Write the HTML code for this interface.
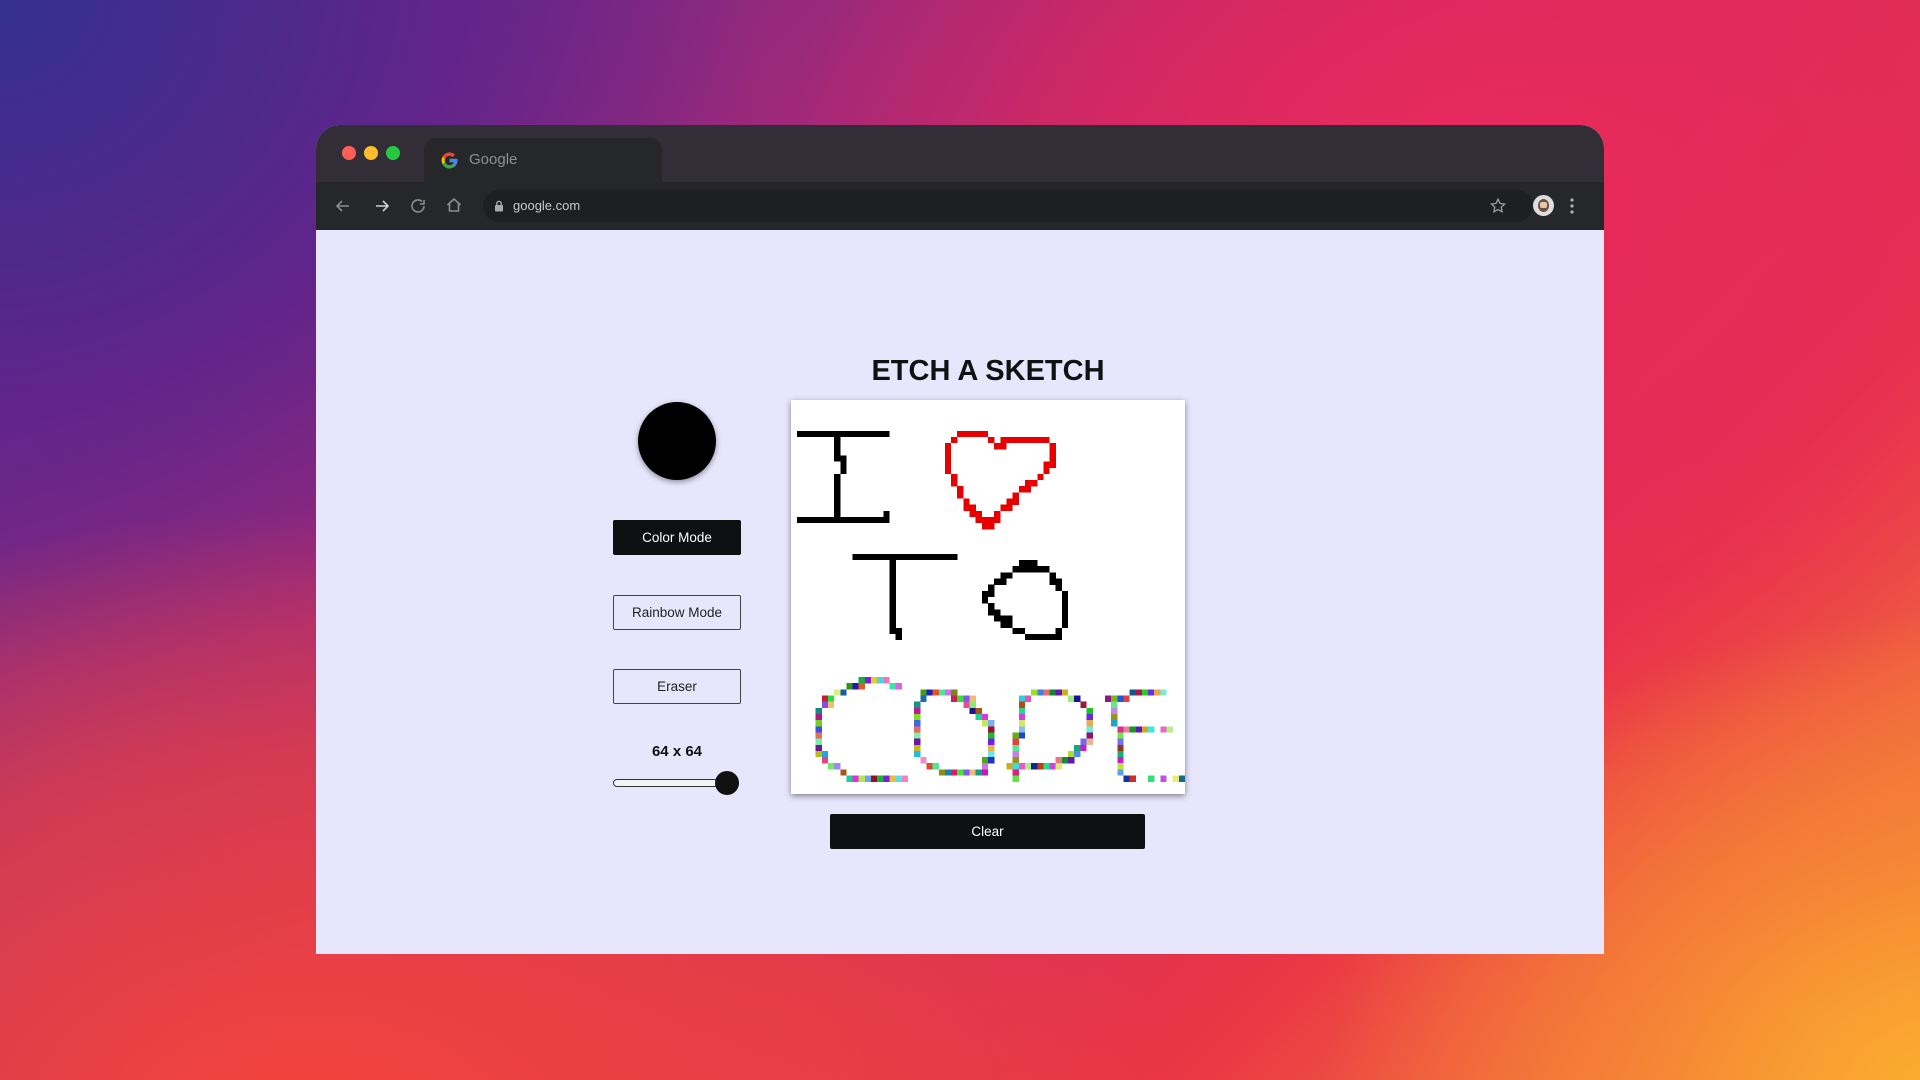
<!DOCTYPE html>
<html><head><meta charset="utf-8"><style>
*{margin:0;padding:0;box-sizing:border-box}
body{width:1920px;height:1080px;overflow:hidden;position:relative;font-family:"Liberation Sans",sans-serif;
background:
radial-gradient(ellipse 900px 700px at 1950px 1100px,#fbb02f 0%,rgba(247,140,50,.7) 35%,rgba(240,80,60,0) 70%),
radial-gradient(ellipse 1100px 800px at 300px 1150px,#f4453a 0%,rgba(240,70,60,.6) 50%,rgba(240,70,60,0) 80%),
radial-gradient(ellipse 900px 700px at 1500px 200px,#ea2a5a 0%,rgba(230,40,90,.6) 45%,rgba(230,40,90,0) 80%),
radial-gradient(ellipse 900px 800px at 0px 0px,#35308e 0%,rgba(90,35,140,.8) 50%,rgba(120,35,140,0) 85%),
linear-gradient(135deg,#5a2a8f 0%,#c0286e 45%,#ea3645 75%,#f6903a 100%);}
.win{position:absolute;left:316px;top:125px;width:1288px;height:829px;border-radius:24px 24px 0 0;overflow:hidden;background:#e8e6fc}
.tabbar{position:absolute;left:0;top:0;width:100%;height:57px;background:rgba(35,30,40,.93)}
.dot{position:absolute;top:21px;width:14px;height:14px;border-radius:50%}
.tab{position:absolute;left:108px;top:13px;width:238px;height:50px;background:#25272b;border-radius:12px 12px 0 0}
.tab span{position:absolute;left:45px;top:13px;color:#8e9094;font-size:15px}
.toolbar{position:absolute;left:0;top:57px;width:100%;height:48px;background:#25272b}
.omni{position:absolute;left:167px;top:8px;width:1050px;height:32px;border-radius:16px;background:#1d1f22}
.omni span{position:absolute;left:30px;top:8px;color:#c8c9cc;font-size:13px}
.content{position:absolute;left:0;top:105px;width:100%;height:724px;background:#e8e6fc}
h1{position:absolute;left:375px;width:594px;text-align:center;font-size:29px;font-weight:bold;color:#111;top:125px;letter-spacing:0}
.circle{position:absolute;left:322px;top:172px;width:78px;height:78px;border-radius:50%;background:#000;box-shadow:0 2px 6px rgba(0,0,0,.4)}
.btn{position:absolute;left:297px;width:128px;height:35px;border:1px solid #444;border-radius:2px;font-size:13.5px;color:#222;display:flex;align-items:center;justify-content:center;background:transparent}
.canvas{position:absolute;left:475px;top:170px;width:394px;height:394px;background:#fff;box-shadow:0 2px 6px rgba(0,0,0,.45)}
</style></head><body>
<div class="win">
 <div class="tabbar">
  <div class="dot" style="left:26px;background:#fe5f57"></div>
  <div class="dot" style="left:48px;background:#febc2e"></div>
  <div class="dot" style="left:70px;background:#28c840"></div>
  <div class="tab">
   <svg style="position:absolute;left:16px;top:13px" width="19" height="19" viewBox="0 0 48 48"><path d="M43.6 20H24v8h11.3C33.7 33 29.3 36 24 36c-6.6 0-12-5.4-12-12s5.4-12 12-12c3 0 5.8 1.1 7.9 3l5.7-5.7C34 6 29.3 4 24 4 13 4 4 13 4 24s9 20 20 20 20-9 20-20c0-1.3-.1-2.7-.4-4z" fill="#fbbc05"/><path d="M6.3 14.7l6.6 4.8C14.7 15.1 19 12 24 12c3 0 5.8 1.1 7.9 3l5.7-5.7C34 6 29.3 4 24 4 16.3 4 9.7 8.3 6.3 14.7z" fill="#ea4335"/><path d="M24 44c5.2 0 9.9-2 13.4-5.2l-6.2-5.2C29.2 35.1 26.7 36 24 36c-5.2 0-9.6-3.3-11.3-8l-6.5 5C9.5 39.6 16.2 44 24 44z" fill="#34a853"/><path d="M43.6 20H24v8h11.3c-.8 2.2-2.2 4.2-4.1 5.6l6.2 5.2C41 35.3 44 30 44 24c0-1.3-.1-2.7-.4-4z" fill="#4285f4"/></svg>
   <span>Google</span>
  </div>
 </div>
 <div class="toolbar">
  <svg style="position:absolute;left:18px;top:15px" width="18" height="18" viewBox="0 0 18 18" fill="none" stroke="#8a8c90" stroke-width="1.6"><path d="M15 9H3M8 4L3 9l5 5"/></svg>
  <svg style="position:absolute;left:57px;top:15px" width="18" height="18" viewBox="0 0 18 18" fill="none" stroke="#d0d1d4" stroke-width="1.6"><path d="M3 9h12M10 4l5 5-5 5"/></svg>
  <svg style="position:absolute;left:93px;top:15px" width="18" height="18" viewBox="0 0 18 18" fill="none" stroke="#8a8c90" stroke-width="1.6"><path d="M15 9a6 6 0 1 1-2-4.5M15 3v4h-4"/></svg>
  <svg style="position:absolute;left:129px;top:14px" width="18" height="18" viewBox="0 0 18 18" fill="none" stroke="#8a8c90" stroke-width="1.6"><path d="M2.5 9L9 3l6.5 6M4.5 7.5V15h9V7.5"/></svg>
  <div class="omni">
   <svg style="position:absolute;left:11px;top:10px" width="10" height="12" viewBox="0 0 10 12"><rect x="1" y="5" width="8" height="6.5" rx="1" fill="#aaa"/><path d="M2.8 5V3.5a2.2 2.2 0 0 1 4.4 0V5" fill="none" stroke="#aaa" stroke-width="1.4"/></svg>
   <span>google.com</span>
   <svg style="position:absolute;left:1006px;top:7px" width="18" height="18" viewBox="0 0 24 24" fill="none" stroke="#a0a2a6" stroke-width="1.7"><path d="M12 3l2.7 5.6 6.1.8-4.5 4.2 1.1 6.1L12 16.8 6.6 19.7l1.1-6.1L3.2 9.4l6.1-.8z"/></svg>
  </div>
  <div style="position:absolute;left:1217px;top:13px;width:21px;height:21px;border-radius:50%;background:#ddd;overflow:hidden"><div style="position:absolute;left:5px;top:4px;width:11px;height:13px;border-radius:50%;background:#6b5040"></div><div style="position:absolute;left:7px;top:7px;width:7px;height:6px;background:#e8c6a8;border-radius:2px"></div></div>
  <svg style="position:absolute;left:1253px;top:15px" width="6" height="18" viewBox="0 0 6 18" fill="#b0b2b6"><circle cx="3" cy="3" r="1.6"/><circle cx="3" cy="9" r="1.6"/><circle cx="3" cy="15" r="1.6"/></svg>
 </div>
 <div class="content">
  <h1>ETCH A SKETCH</h1>
  <div class="circle"></div>
  <div class="btn" style="top:290px;background:#0d0f10;color:#fff;border-color:#0d0f10">Color Mode</div>
  <div class="btn" style="top:365px">Rainbow Mode</div>
  <div class="btn" style="top:439px">Eraser</div>
  <div style="position:absolute;left:297px;width:128px;top:513px;text-align:center;font-weight:bold;font-size:15px;color:#111">64 x 64</div>
  <div style="position:absolute;left:297px;top:549px;width:126px;height:8px;border:1px solid #333;border-radius:4px;background:#f4f4f4"></div>
  <div style="position:absolute;left:399px;top:541px;width:24px;height:24px;border-radius:50%;background:#111"></div>
  <div class="canvas"><svg id="sk" width="394" height="394" viewBox="0 0 64 64" shape-rendering="crispEdges"></svg></div>
  <div style="position:absolute;left:514px;top:584px;width:315px;height:35px;background:#0d0f10;border-radius:2px;color:#fff;font-size:13.5px;display:flex;align-items:center;justify-content:center">Clear</div>
 </div>
</div>
<script>
var s=document.getElementById('sk'),h='';
function R(c,x1,x2,y1,y2){for(var x=x1;x<=x2;x++)for(var y=y1;y<=y2;y++)h+='<rect x="'+x+'" y="'+y+'" width="1.02" height="1.02" fill="'+c+'"/>';}
var k='#000';
R(k,1,15,5,5);R(k,7,7,6,9);R(k,8,8,9,11);R(k,7,7,12,18);R(k,1,15,19,19);R(k,15,15,18,18);
var r='#e80000';
R(r,27,31,5,5);R(r,26,26,6,6);R(r,32,32,6,6);R(r,34,41,6,6);R(r,33,34,7,7);R(r,25,25,7,11);R(r,42,42,7,10);R(r,41,41,10,11);R(r,40,40,12,12);R(r,38,39,13,13);R(r,37,38,14,14);R(r,26,26,12,13);R(r,27,27,14,15);R(r,36,36,15,15);R(r,35,36,16,16);R(r,34,35,17,17);R(r,28,28,16,17);R(r,29,29,17,18);R(r,30,30,18,19);R(r,31,32,19,20);R(r,33,33,18,19);
R(k,10,26,25,25);R(k,16,16,26,37);R(k,17,17,37,38);
R(k,37,39,26,26);R(k,36,41,27,27);R(k,34,35,28,28);R(k,42,42,28,28);R(k,33,34,29,29);R(k,42,43,29,29);R(k,32,32,30,30);R(k,43,43,30,30);R(k,31,31,31,32);R(k,32,32,31,31);R(k,44,44,31,36);R(k,32,32,33,34);R(k,33,33,34,35);R(k,34,35,35,36);R(k,36,37,37,37);R(k,38,43,38,38);R(k,43,43,37,37);
var n=0;function Q(x1,x2,y1,y2){for(var x=x1;x<=x2;x++)for(var y=y1;y<=y2;y++){n++;var hu=(n*137.5)%360,l=30+((n*53)%45);R('hsl('+hu+',75%,'+l+'%)',x,x,y,y);}}
Q(11,15,45,45);Q(9,11,46,46);Q(16,17,46,46);Q(7,8,47,47);Q(5,6,48,48);Q(5,6,49,49);Q(4,4,50,57);Q(5,5,57,58);Q(6,7,59,59);Q(8,8,60,60);Q(9,18,61,61);
Q(21,26,47,47);Q(21,21,48,48);Q(26,29,48,48);Q(20,20,49,57);Q(28,29,49,49);Q(29,30,50,50);Q(30,31,51,51);Q(31,32,52,52);Q(32,32,53,57);Q(21,21,58,58);Q(31,32,58,58);Q(22,23,59,59);Q(31,31,59,59);Q(24,31,60,60);
Q(39,44,47,47);Q(37,38,48,48);Q(45,46,48,48);Q(37,37,49,53);Q(47,47,49,49);Q(48,48,50,54);Q(36,37,54,54);Q(36,36,55,61);Q(47,48,55,55);Q(46,47,56,56);Q(45,46,57,57);Q(43,45,58,58);Q(35,43,59,59);
Q(55,60,47,47);Q(51,54,48,48);Q(52,52,49,52);Q(53,53,53,60);Q(54,58,53,53);Q(60,61,53,53);Q(54,55,61,61);Q(58,58,61,61);Q(60,60,61,61);Q(62,63,61,61);
s.innerHTML=h;
</script>
</body></html>
